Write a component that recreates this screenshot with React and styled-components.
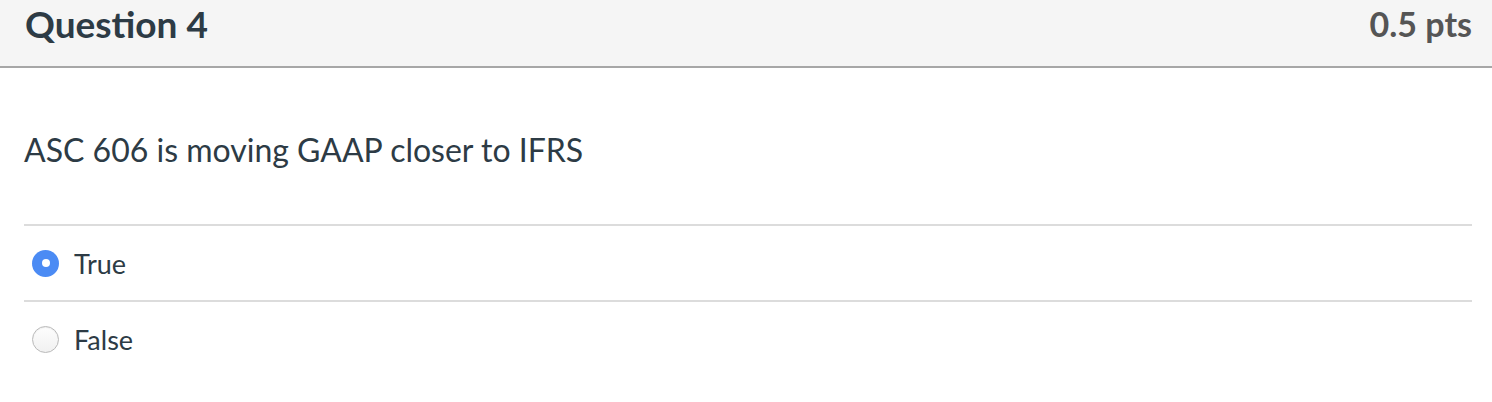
import React, { useState } from 'react';
import styled, { createGlobalStyle } from 'styled-components';

const GlobalStyle = createGlobalStyle`
  body {
    margin: 0;
    background: #fff;
    font-family: 'Lato', 'Liberation Sans', sans-serif;
  }
`;

const Page = styled.div`
  width: 1492px;
  height: 402px;
  background: #fff;
  overflow: hidden;
`;

const Header = styled.div`
  height: 68px;
  box-sizing: border-box;
  display: flex;
  justify-content: space-between;
  align-items: flex-start;
  padding: 2px 20px 0 25px;
  background: #f5f5f5;
  border-bottom: 2px solid #a7a7a7;
`;

const Title = styled.h2`
  margin: 0;
  font-size: 37px;
  line-height: 1.2;
  font-weight: 700;
  color: #2d3b45;
`;

const Points = styled.div`
  font-size: 34px;
  line-height: 1.2;
  font-weight: 700;
  color: #555;
  padding-top: 2px;
`;

const Body = styled.div`
  padding: 63px 20px 0 24px;
`;

const QuestionText = styled.p`
  margin: 0 0 55px;
  font-size: 32px;
  line-height: 1.2;
  color: #2d3b45;
`;

const Answers = styled.div`
  display: flex;
  flex-direction: column;
`;

const Answer = styled.label`
  display: flex;
  align-items: center;
  gap: 15px;
  height: 76px;
  box-sizing: border-box;
  padding-left: 8px;
  border-top: 2px solid #dcdcdc;
  font-size: 27px;
  color: #2d3b45;
  cursor: pointer;
`;

const Radio = styled.span`
  width: 27px;
  height: 27px;
  border-radius: 50%;
  box-sizing: border-box;
  display: flex;
  align-items: center;
  justify-content: center;
  background: ${p => (p.$checked ? '#4b8bf4' : 'linear-gradient(#fdfdfd, #f1f1f1)')};
  border: ${p => (p.$checked ? 'none' : '1px solid #b9b9b9')};
  box-shadow: ${p => (p.$checked ? 'none' : 'inset 0 1px 1px rgba(0,0,0,0.06)')};

  &::after {
    content: '';
    display: ${p => (p.$checked ? 'block' : 'none')};
    width: 8px;
    height: 8px;
    border-radius: 50%;
    background: #fff;
  }
`;

const answers = ['True', 'False'];

export default function App() {
  const [selected, setSelected] = useState('True');

  return (
    <Page>
      <GlobalStyle />
      <Header>
        <Title>Question 4</Title>
        <Points>0.5 pts</Points>
      </Header>
      <Body>
        <QuestionText>ASC 606 is moving GAAP closer to IFRS</QuestionText>
        <Answers>
          {answers.map(a => (
            <Answer key={a} onClick={() => setSelected(a)}>
              <Radio $checked={selected === a} />
              {a}
            </Answer>
          ))}
        </Answers>
      </Body>
    </Page>
  );
}
